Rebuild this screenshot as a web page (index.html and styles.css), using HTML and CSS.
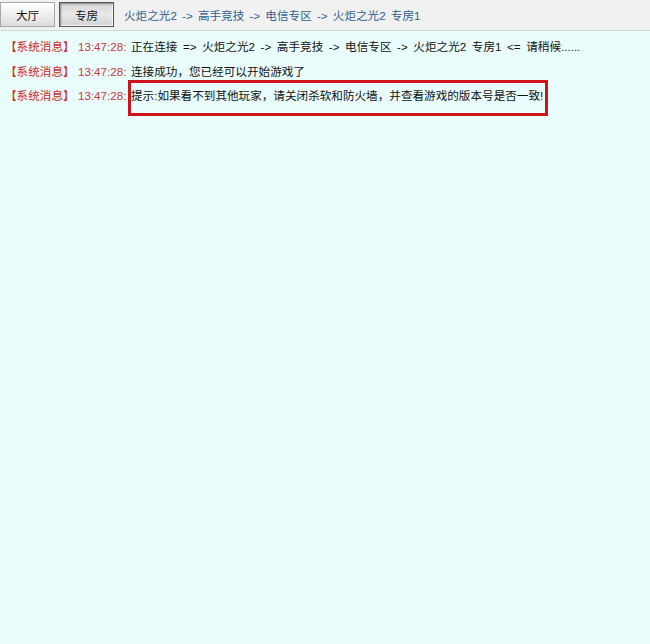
FILE: index.html
```html
<!DOCTYPE html>
<html>
<head>
<meta charset="utf-8">
<link rel="stylesheet" href="styles.css">
</head>
<body>
<div class="page">
  <div class="topbar">
    <div class="btn">大厅</div>
    <div class="btn pressed">专房</div>
    <div class="crumb">火炬之光2 -&gt; 高手竞技 -&gt; 电信专区 -&gt; 火炬之光2 专房1</div>
  </div>
  <div class="log">
    <div class="line"><span class="tag">【系统消息】</span><span class="time">13:47:28:</span><span class="msg">正在连接 =&gt; 火炬之光2 -&gt; 高手竞技 -&gt; 电信专区 -&gt; 火炬之光2 专房1 &lt;= 请稍候......</span></div>
    <div class="line"><span class="tag">【系统消息】</span><span class="time">13:47:28:</span><span class="msg">连接成功，您已经可以开始游戏了</span></div>
    <div class="line boxed"><span class="tag">【系统消息】</span><span class="time">13:47:28:</span><span class="msg">提示:如果看不到其他玩家，请关闭杀软和防火墙，并查看游戏的版本号是否一致!</span><span class="highlight"></span></div>
  </div>
</div>
</body>
</html>
```
FILE: styles.css
```css
html, body {
  margin: 0;
  padding: 0;
}
body {
  font-family: "Liberation Sans", "Noto Sans CJK SC", sans-serif;
  font-size: 11.6px;
  background: #e9fdfd;
}
.page {
  width: 650px;
  height: 644px;
  display: flex;
  flex-direction: column;
  background: #e9fdfd;
  overflow: hidden;
}
.topbar {
  height: 31px;
  box-sizing: border-box;
  background: #f1f1f1;
  border-bottom: 1px solid #d4d8d8;
  display: flex;
  align-items: center;
  padding: 0 0 1px 0;
}
.btn {
  width: 55px;
  height: 25px;
  box-sizing: border-box;
  border: 1px solid #a8a8a8;
  background: linear-gradient(#ffffff, #ececec 60%, #dcdcdc);
  color: #111;
  display: flex;
  align-items: center;
  justify-content: center;
  margin-right: 4px;
}
.btn.pressed {
  border: 1px solid #555;
  background: linear-gradient(#d6d6d6, #e8e8e8 50%, #d0d0d0);
  box-shadow: inset 1px 1px 2px #888, inset -1px -1px 1px #fff;
  margin-right: 10px;
}
.crumb {
  color: #2f5f8f;
  word-spacing: 2px;
}
.log {
  padding: 4px 0 0 5px;
}
.line {
  position: relative;
  height: 24.5px;
  line-height: 24px;
  white-space: nowrap;
}
.tag {
  color: #cc2a2a;
  display: inline-block;
  width: 73px;
}
.time {
  color: #c83a3a;
  display: inline-block;
  width: 53px;
}
.msg {
  color: #111;
  word-spacing: 2.4px;
}
.highlight {
  position: absolute;
  left: 123px;
  top: -4px;
  width: 420px;
  height: 36px;
  box-sizing: border-box;
  border: 3px solid #d0121a;
}
```
